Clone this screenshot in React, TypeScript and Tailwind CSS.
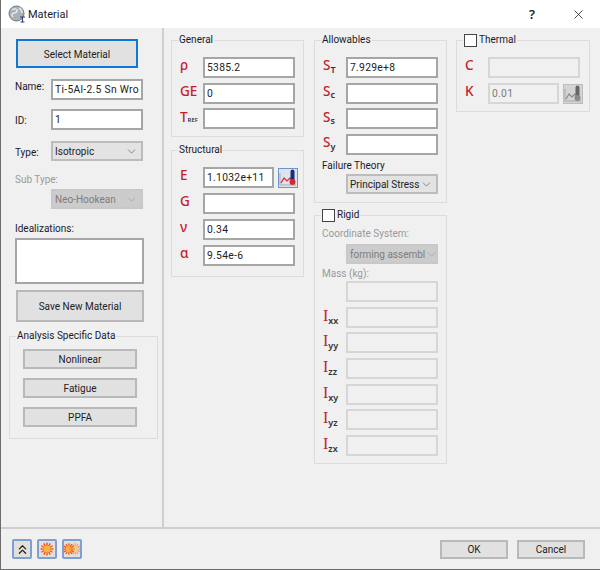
import type { ReactNode } from "react";
import { ChevronDown, ChevronsUp, X } from "lucide-react";

const uiFont = "font-['Roboto',sans-serif] text-[10px] text-[#1a1a2a]";

function Box({ value, disabled, className = "w-[92px]" }: { value?: string; disabled?: boolean; className?: string }) {
  return (
    <input
      readOnly
      disabled={disabled}
      value={value ?? ""}
      className={`h-[21px] shrink-0 border-2 px-[2px] text-[10.3px] tracking-[0.3px] outline-none ${className} ${
        disabled ? "border-[#d6d6d6] bg-[#f0f0f0] text-[#7a7a7a]" : "border-[#a6a6a6] bg-white text-[#222]"
      }`}
    />
  );
}

function Dropdown({ value, disabled, className = "" }: { value: string; disabled?: boolean; className?: string }) {
  return (
    <div
      className={`flex h-[20px] w-[92px] shrink-0 items-center justify-between border-2 pl-[2px] pr-[3px] pt-[1px] ${className} ${
        disabled ? "border-[#c8c8c8] bg-[#cccccc] text-[#7d7d7d]" : "border-[#bcbcbc] bg-[#e3e3e3] text-[#222]"
      }`}
    >
      <span className="whitespace-nowrap">{value}</span>
      <ChevronDown size={13} strokeWidth={1.2} className={`shrink-0 ${disabled ? "text-[#9a9a9a]" : "text-[#555]"}`} />
    </div>
  );
}

function Btn({ children, className, focused }: { children: ReactNode; className: string; focused?: boolean }) {
  return (
    <div
      className={`flex items-center justify-center border-2 bg-[#e1e1e1] pt-[1px] text-[#222] ${
        focused ? "border-[#0f78d4]" : "border-[#b9b9b9]"
      } ${className}`}
    >
      {children}
    </div>
  );
}

function Sym({ base, sub, serif, tiny }: { base: string; sub?: string; serif?: boolean; tiny?: boolean }) {
  return (
    <span className="flex w-[31px] shrink-0 items-end pb-[3px] pl-[8px] leading-none">
      <span
        className={`text-[#c3202c] ${
          serif ? "font-['Liberation_Serif',serif] text-[16px]" : "font-['Noto_Sans',sans-serif] text-[13.5px] font-medium"
        }`}
      >
        {base}
      </span>
      {sub && (
        <span
          className={`font-['Noto_Sans',sans-serif] font-semibold text-[#333] ${
            tiny ? "text-[6px] leading-[7px]" : "-mb-[2px] text-[9px] leading-[10px]"
          }`}
        >
          {sub}
        </span>
      )}
    </span>
  );
}

function Row({ children }: { children: ReactNode }) {
  return <div className="flex h-[21px] items-center">{children}</div>;
}

function Group({ title, children, className = "" }: { title: ReactNode; children: ReactNode; className?: string }) {
  return (
    <fieldset className={`min-w-0 border border-[#dcdcdc] ${className}`}>
      <legend className="ml-[6px] px-[1px] leading-[14px]">{title}</legend>
      {children}
    </fieldset>
  );
}

function Check({ label }: { label: string }) {
  return (
    <span className="flex items-center gap-[2px]">
      <span className="h-[13px] w-[13px] border border-[#444] bg-white" />
      <span>{label}</span>
    </span>
  );
}

function ChartIcon({ active }: { active?: boolean }) {
  const red = active ? "#d9272e" : "#8a8a8a";
  const bulb = active ? "#17307a" : "#666";
  return (
    <div
      className={`ml-[4px] flex h-[20px] w-[20px] shrink-0 items-center justify-center border ${
        active ? "border-[#6f93cf] bg-[#dfe4ec]" : "border-[#bdbdbd] bg-[#d4d4d4]"
      }`}
    >
      <svg viewBox="0 0 18 18" width="18" height="18">
        <path d="M1 4v12h16" fill="none" stroke="#a8a8a8" strokeWidth="1" />
        <path d="M2 14l3-5 3 3 3-3 3 2" fill="none" stroke={red} strokeWidth="1.2" />
        <rect x="11.500" y="0.500" width="4" height="12" rx="2" fill={bulb} />
        <circle cx="13.500" cy="13" r="3" fill={red} />
      </svg>
    </div>
  );
}

function Burst({ x, faded }: { x: number; faded?: boolean }) {
  const rays = [0, 30, 60, 90, 120, 150];
  return (
    <g opacity={faded ? 0.45 : 1}>
      {rays.map((r) => (
        <rect key={r} x={x - 0.7} y={1.500} width={1.4} height={13} fill="#ee4f1c" transform={`rotate(${r} ${x} 8)`} />
      ))}
      <circle cx={x} cy={8} r={3.500} fill="#f9b233" />
    </g>
  );
}

function ToolBtn({ children }: { children: ReactNode }) {
  return (
    <div className="flex h-[20px] w-[20px] items-center justify-center rounded-[2px] border-2 border-[#7c9fd4] bg-[#e3e0da]">
      {children}
    </div>
  );
}

export default function App() {
  return (
    <div className={`flex h-[570px] w-[600px] flex-col border-b border-l border-[#6d6d6d] bg-[#f0f0f0] ${uiFont}`}>
      {/* title bar */}
      <div className="flex h-[28px] shrink-0 items-center bg-white">
        <svg viewBox="0 0 18 18" width="18" height="18" className="ml-[7px]">
          <circle cx="8.500" cy="8.500" r="7.500" fill="#a9b0b6" stroke="#6f7a84" />
          <path d="M4 5c2-2 4-1 5 0s-1 3-3 3-3 2-1 4M11 3c2 1 3 3 3 5" fill="none" stroke="#e4e7ea" strokeWidth="1.6" />
          <path d="M12 12h5M14.500 12v5M12.500 17h4" stroke="#2a3f6e" strokeWidth="1.1" />
        </svg>
        <span className="ml-[2px] pt-[2px] text-[11px]">Material</span>
        <span className="ml-auto font-['Noto_Sans',sans-serif] text-[13px] font-semibold leading-none text-[#222]">?</span>
        <X size={15} strokeWidth={1.2} className="ml-[36px] mr-[14px] text-[#111]" />
      </div>

      {/* main area */}
      <div className="flex min-h-0 flex-1 border-b-2 border-[#cfcfcf]">
        <div className="flex w-[163px] shrink-0 flex-col border-r-2 border-[#cfcfcf] pt-[11px]">
          <Btn focused className="ml-[15px] h-[29px] w-[122px]">Select Material</Btn>
          <div className="ml-[14px] mt-[11px] flex items-center">
            <span className="-mt-[6px] w-[36px]">Name:</span>
            <Box value="Ti-5Al-2.5 Sn Wrought" />
          </div>
          <div className="ml-[14px] mt-[9px] flex items-center">
            <span className="w-[36px] pt-[2px]">ID:</span>
            <Box value="1" />
          </div>
          <div className="ml-[14px] mt-[11px] flex items-center">
            <span className="w-[36px] pt-[2px]">Type:</span>
            <Dropdown value="Isotropic" />
          </div>
          <span className="ml-[14px] mt-[11px] leading-[16px] text-[#9a9a9a]">Sub Type:</span>
          <Dropdown value="Neo-Hookean" disabled className="ml-[50px] mt-[1px]" />
          <span className="ml-[14px] mt-[12px] leading-[16px]">Idealizations:</span>
          <div className="ml-[14px] mt-[1px] h-[46px] w-[129px] border-2 border-[#a6a6a6] bg-white" />
          <Btn className="ml-[15px] mt-[6px] h-[32px] w-[128px]">Save New Material</Btn>
          <Group title="Analysis Specific Data" className="ml-[8px] mt-[7px] h-[110px] w-[149px]">
            <div className="flex flex-col gap-[9px] pl-[13px] pt-[6px]">
              <Btn className="h-[20px] w-[114px]">Nonlinear</Btn>
              <Btn className="h-[20px] w-[114px]">Fatigue</Btn>
              <Btn className="h-[20px] w-[114px]">PPFA</Btn>
            </div>
          </Group>
        </div>

        <div className="flex w-[140px] shrink-0 flex-col gap-[6px] pl-[7px] pt-[5px]">
          <Group title="General" className="h-[104px] w-[133px]">
            <div className="flex flex-col gap-[4.7px] pt-[10px]">
              <Row><Sym base="ρ" /><Box value="5385.2" /></Row>
              <Row><Sym base="GE" /><Box value="0" /></Row>
              <Row><Sym base="T" sub="REF" tiny /><Box /></Row>
            </div>
          </Group>
          <Group title="Structural" className="h-[134px] w-[133px]">
            <div className="flex flex-col gap-[5px] pt-[10px]">
              <Row><Sym base="E" /><Box value="1.1032e+11" className="w-[71px]" /><ChartIcon active /></Row>
              <Row><Sym base="G" /><Box /></Row>
              <Row><Sym base="ν" /><Box value="0.34" /></Row>
              <Row><Sym base="α" /><Box value="9.54e-6" /></Row>
            </div>
          </Group>
        </div>

        <div className="flex w-[143px] shrink-0 flex-col gap-[5px] pl-[10px] pt-[5px]">
          <Group title="Allowables" className="h-[170px] w-[133px]">
            <div className="flex flex-col gap-[4.7px] pt-[10px]">
              <Row><Sym base="S" sub="T" /><Box value="7.929e+8" /></Row>
              <Row><Sym base="S" sub="c" /><Box /></Row>
              <Row><Sym base="S" sub="s" /><Box /></Row>
              <Row><Sym base="S" sub="y" /><Box /></Row>
            </div>
            <div className="mt-[3px] pl-[7px] leading-[16px]">Failure Theory</div>
            <Dropdown value="Principal Stress" className="ml-[31px]" />
          </Group>
          <Group title={<Check label="Rigid" />} className="h-[256px] w-[133px]">
            <div className="mt-[4px] pl-[7px] leading-[16px] text-[#9a9a9a]">Coordinate System:</div>
            <Dropdown value="forming assembl" disabled className="ml-[31px] mt-[2px]" />
            <div className="mt-[2px] pl-[7px] leading-[16px] text-[#9a9a9a]">Mass (kg):</div>
            <div className="flex flex-col gap-[4.7px] -mt-[1px]">
              <Row><Sym base="" /><Box disabled /></Row>
              <Row><Sym serif base="I" sub="xx" /><Box disabled /></Row>
              <Row><Sym serif base="I" sub="yy" /><Box disabled /></Row>
              <Row><Sym serif base="I" sub="zz" /><Box disabled /></Row>
              <Row><Sym serif base="I" sub="xy" /><Box disabled /></Row>
              <Row><Sym serif base="I" sub="yz" /><Box disabled /></Row>
              <Row><Sym serif base="I" sub="zx" /><Box disabled /></Row>
            </div>
          </Group>
        </div>

        <div className="pl-[9px] pt-[5px]">
          <Group title={<Check label="Thermal" />} className="h-[79px] w-[134px]">
            <div className="flex flex-col gap-[5px] pt-[10px]">
              <Row><Sym base="C" /><Box disabled /></Row>
              <Row><Sym base="K" /><Box disabled value="0.01" className="w-[71px]" /><ChartIcon /></Row>
            </div>
          </Group>
        </div>
      </div>

      {/* footer */}
      <div className="flex h-[40px] shrink-0 items-center pl-[11px] pr-[15px]">
        <div className="flex gap-[5px]">
          <ToolBtn><ChevronsUp size={15} strokeWidth={2} className="text-[#222]" /></ToolBtn>
          <ToolBtn>
            <svg viewBox="0 0 16 16" width="16" height="16"><Burst x={8} /></svg>
          </ToolBtn>
          <ToolBtn>
            <svg viewBox="0 0 18 16" width="18" height="16"><Burst x={5.500} /><Burst x={12.500} faded /></svg>
          </ToolBtn>
        </div>
        <Btn className="ml-auto h-[19px] w-[68px]">OK</Btn>
        <Btn className="ml-[9px] h-[19px] w-[68px]">Cancel</Btn>
      </div>
    </div>
  );
}
